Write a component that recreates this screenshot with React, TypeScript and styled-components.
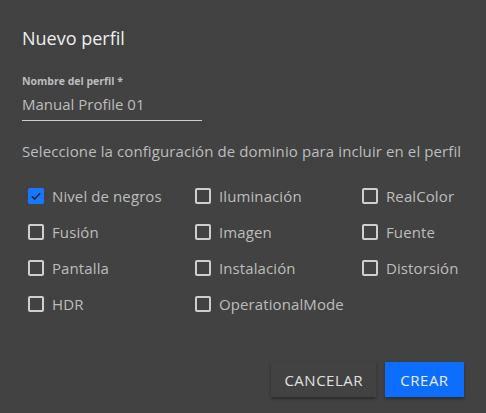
import { useState } from "react";
import styled, { createGlobalStyle } from "styled-components";

const GlobalStyle = createGlobalStyle`
  html, body {
    margin: 0;
    padding: 0;
    background: #424242;
  }
  body {
    font-family: "Open Sans", "Noto Sans", sans-serif;
  }
`;

const OPTIONS = [
  "Nivel de negros", "Iluminación", "RealColor",
  "Fusión", "Imagen", "Fuente",
  "Pantalla", "Instalación", "Distorsión",
  "HDR", "OperationalMode",
];

export default function App() {
  const [name, setName] = useState("Manual Profile 01");
  const [checked, setChecked] = useState<string[]>(["Nivel de negros"]);

  const toggle = (opt: string) => {
    setChecked(checked.includes(opt) ? checked.filter((c) => c !== opt) : [...checked, opt]);
  };

  return (
    <>
      <GlobalStyle />
      <Dialog>
        <Title>Nuevo perfil</Title>
        <Field>
          <FieldLabel>Nombre del perfil *</FieldLabel>
          <NameInput value={name} onChange={(e) => setName(e.target.value)} />
        </Field>
        <Description>Seleccione la configuración de dominio para incluir en el perfil</Description>
        <OptionsGrid>
          {OPTIONS.map((opt) => {
            const on = checked.includes(opt);
            return (
              <Option key={opt} onClick={() => toggle(opt)}>
                <Box $checked={on}>
                  {on && (
                    <svg width="12" height="12" viewBox="0 0 12 12">
                      <path d="M1.8 6.2 L4.6 9 L10.2 3.2" fill="none" stroke="#1a1a2a" strokeWidth="1.4" />
                    </svg>
                  )}
                </Box>
                <OptionLabel>{opt}</OptionLabel>
              </Option>
            );
          })}
        </OptionsGrid>
        <Actions>
          <Button>CANCELAR</Button>
          <Button $primary>CREAR</Button>
        </Actions>
      </Dialog>
    </>
  );
}

const Dialog = styled.div`
  width: 486px;
  height: 413px;
  box-sizing: border-box;
  background: #424242;
  padding: 26px 22px 0 22px;
  display: flex;
  flex-direction: column;
`;

const Title = styled.h2`
  margin: 0;
  font-size: 18px;
  font-weight: 500;
  color: #eeeeee;
  line-height: 24px;
`;

const Field = styled.div`
  margin-top: 24px;
  width: 180px;
  display: flex;
  flex-direction: column;
`;

const FieldLabel = styled.label`
  font-size: 10.5px;
  font-weight: 700;
  color: #bdbdbd;
  line-height: 14px;
`;

const NameInput = styled.input`
  margin-top: 4px;
  background: transparent;
  border: none;
  border-bottom: 1px solid #cfcfcf;
  padding: 2px 0 6px 0;
  font-family: inherit;
  font-size: 15px;
  color: #bdbdbd;
  outline: none;
  line-height: 20px;
`;

const Description = styled.p`
  margin: 21px 0 0 0;
  font-size: 15px;
  letter-spacing: 0.1px;
  color: #bdbdbd;
  line-height: 18px;
`;

const OptionsGrid = styled.div`
  margin-top: 18px;
  padding-left: 6px;
  display: grid;
  grid-template-columns: 167px 167px 1fr;
  grid-auto-rows: 36px;
`;

const Option = styled.div`
  display: flex;
  align-items: center;
  gap: 8px;
  cursor: pointer;
  white-space: nowrap;
`;

const Box = styled.span<{ $checked?: boolean }>`
  box-sizing: border-box;
  flex: none;
  width: 16px;
  height: 16px;
  border-radius: 2px;
  border: ${(p) => (p.$checked ? "none" : "2px solid #cfcfcf")};
  background: ${(p) => (p.$checked ? "#1976ff" : "transparent")};
  display: flex;
  align-items: center;
  justify-content: center;
`;

const OptionLabel = styled.span`
  font-size: 15px;
  letter-spacing: 0.1px;
  color: #bdbdbd;
`;

const Actions = styled.div`
  margin-top: auto;
  margin-bottom: 16px;
  display: flex;
  justify-content: flex-end;
  gap: 9px;
`;

const Button = styled.button<{ $primary?: boolean }>`
  height: 35px;
  min-width: 79px;
  padding: 0 13px;
  border: none;
  border-radius: 0;
  font-family: inherit;
  font-size: 15px;
  letter-spacing: 0.5px;
  color: ${(p) => (p.$primary ? "#e8f0ff" : "#e0e0e0")};
  background: ${(p) => (p.$primary ? "#0d6efd" : "#424242")};
  box-shadow: 0 2px 3px rgba(0, 0, 0, 0.35);
  cursor: pointer;
`;
